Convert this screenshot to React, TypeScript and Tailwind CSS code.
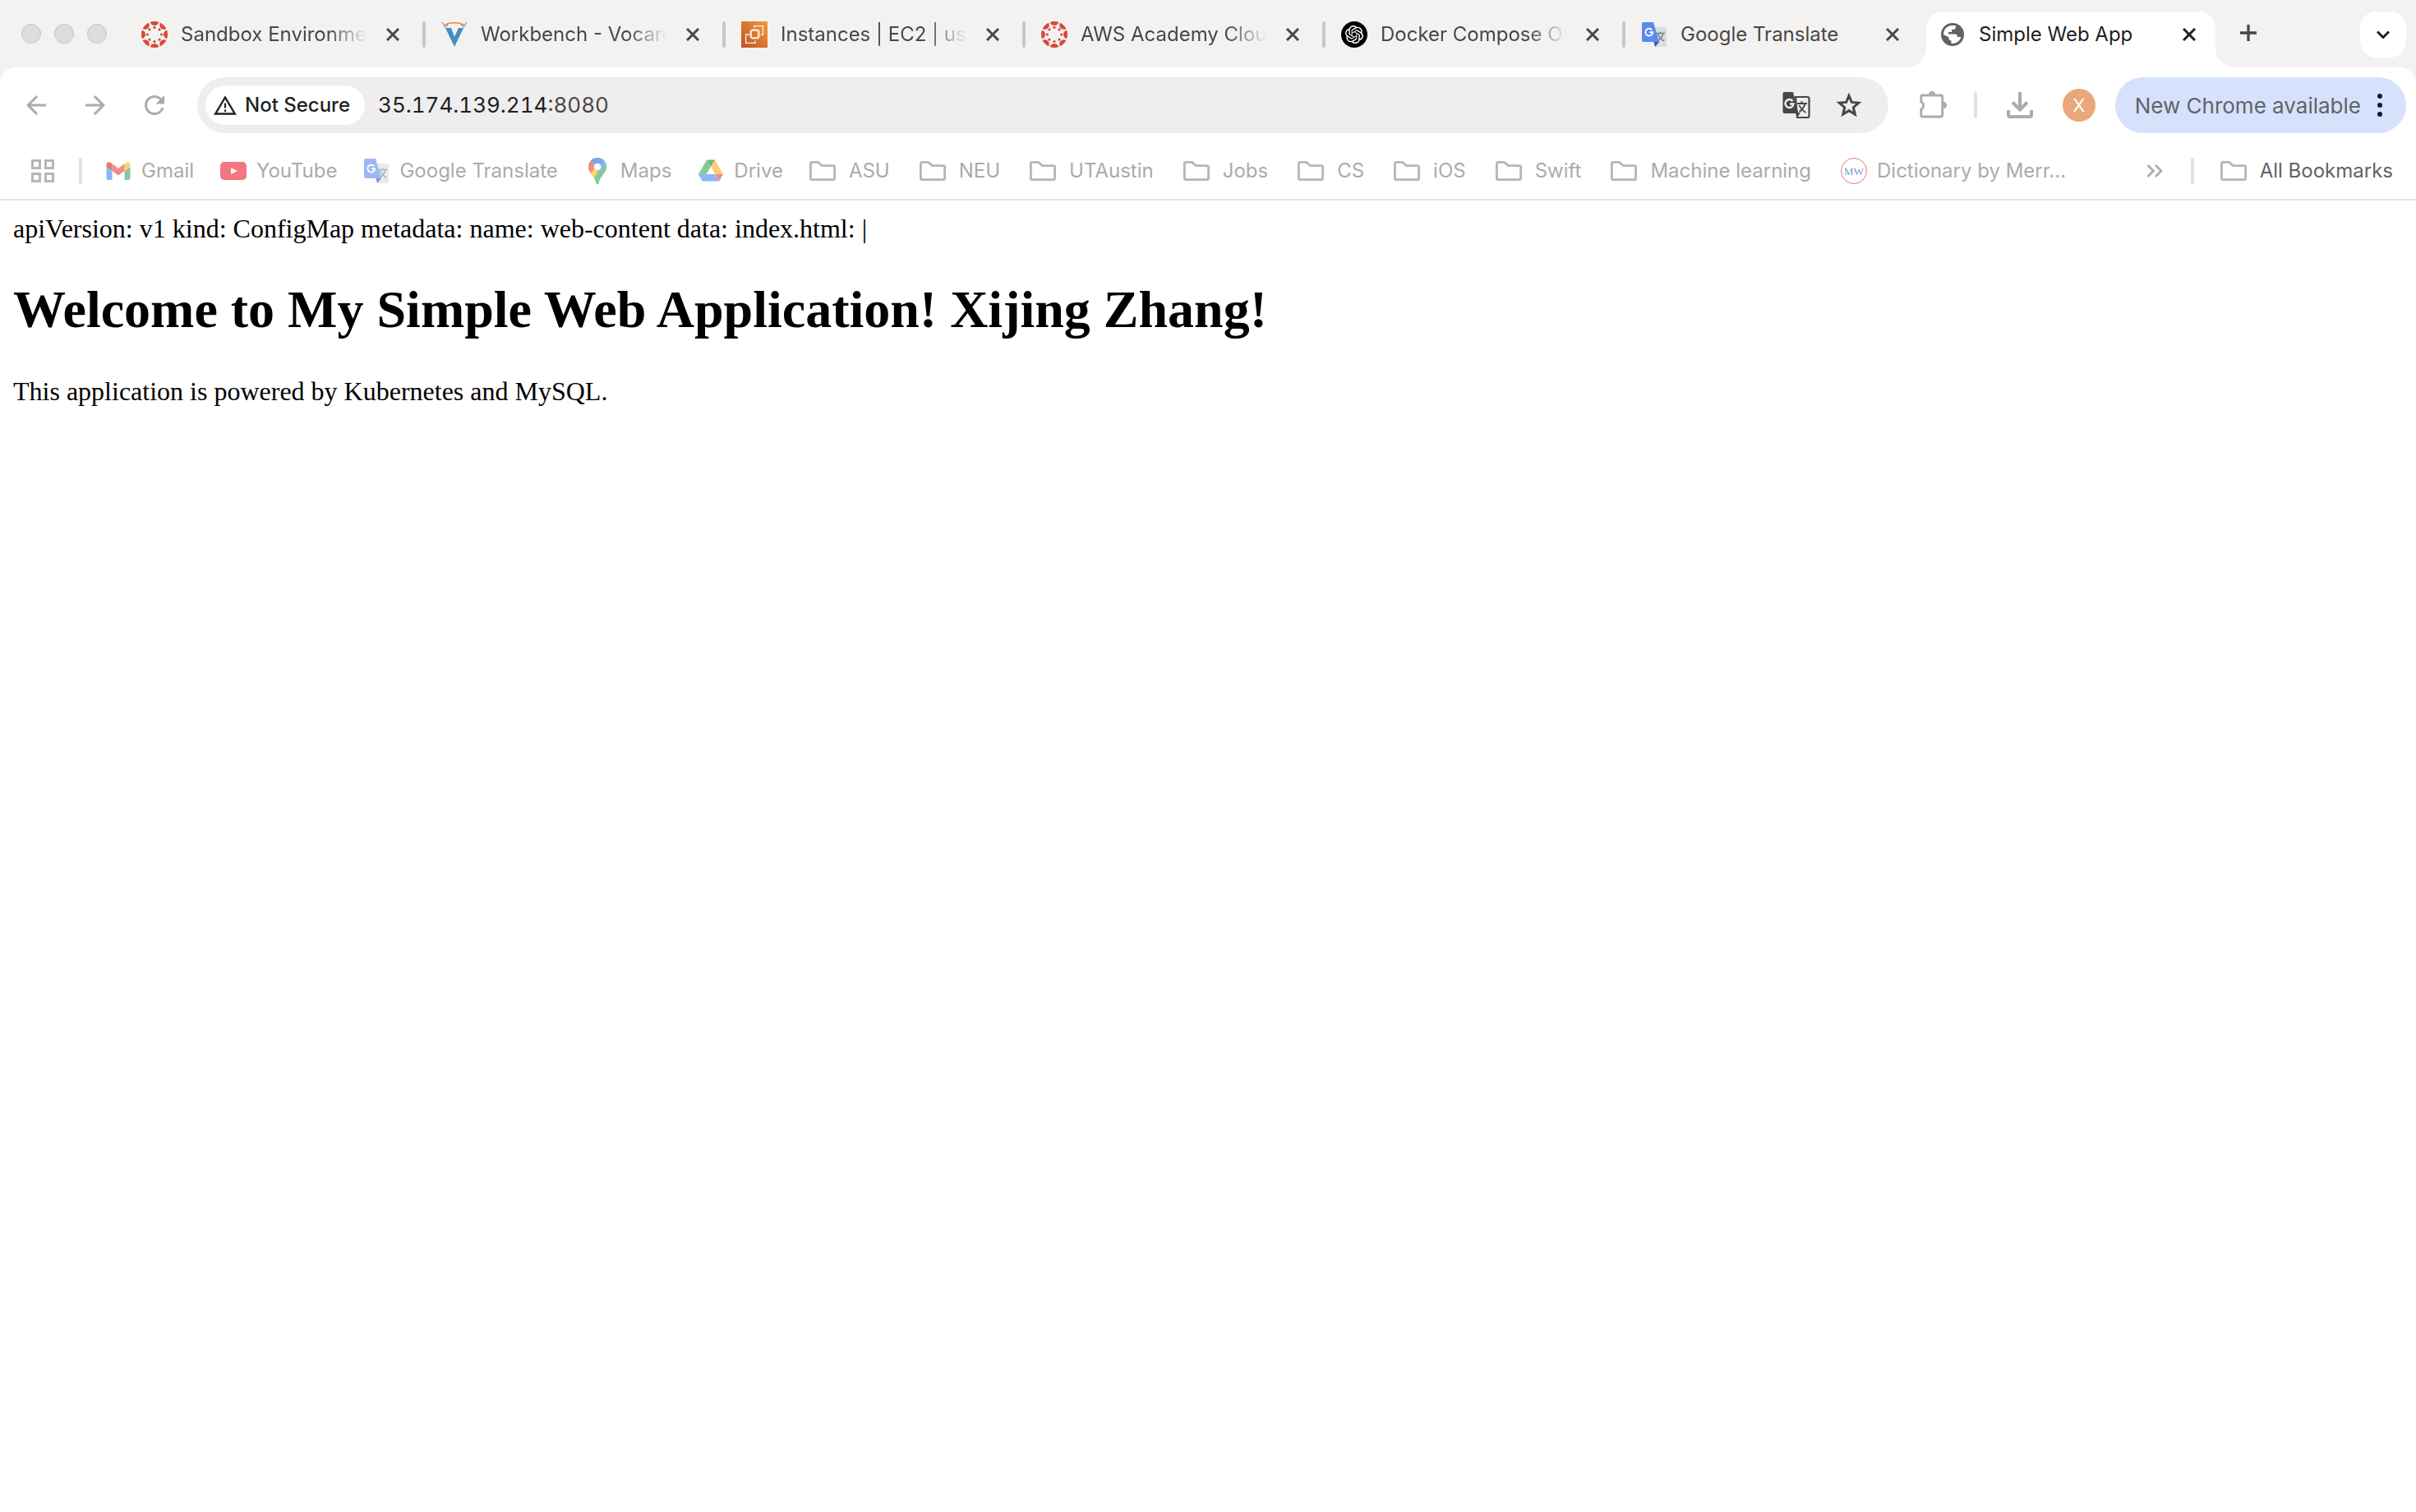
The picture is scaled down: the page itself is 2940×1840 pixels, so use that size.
import React from "react";
import { SiOpenai } from "react-icons/si";
import { MdArrowBack, MdArrowForward, MdRefresh } from "react-icons/md";

function CanvasIcon() {
  const spokes = [0, 45, 90, 135, 180, 225, 270, 315];
  return (
    <svg viewBox="0 0 32 32" className="size-8 shrink-0" fill="#d64a36" aria-hidden="true">
      <defs>
        <clipPath id="ring">
          <circle cx="16" cy="16" r="16" />
        </clipPath>
      </defs>
      <g clipPath="url(#ring)">
        {spokes.map((a) => (
          <g key={a} transform={`rotate(${a} 16 16)`}>
            <circle cx="16" cy="-0.4" r="5.4" />
            <circle cx="16" cy="7.4" r="1.6" />
          </g>
        ))}
      </g>
    </svg>
  );
}

function VocareumIcon() {
  return (
    <svg viewBox="0 0 32 32" className="size-8 shrink-0" aria-hidden="true">
      <path d="M5 8h7l4 11 5-11h6L16 31z" fill="#3f8fbf" />
      <path d="M1 1l5 8M31 1l-5 8" stroke="#6aa9cd" strokeWidth="1.4" fill="none" />
      <path d="M5 4c6-3 16-3 22 0" stroke="#ee8151" strokeWidth="1.6" fill="none" />
      <path d="M3 5l5-3v4zM29 5l-5-3v4z" fill="#ee8151" />
    </svg>
  );
}

function Ec2Icon() {
  return (
    <svg viewBox="0 0 32 32" className="size-8 shrink-0" aria-hidden="true">
      <defs>
        <linearGradient id="ec2" x1="0" y1="1" x2="1" y2="0">
          <stop offset="0" stopColor="#bd5226" />
          <stop offset="1" stopColor="#f49d37" />
        </linearGradient>
      </defs>
      <rect width="32" height="32" fill="url(#ec2)" />
      <g fill="none" stroke="#fff" strokeWidth="1.3">
        <rect x="12" y="11" width="9" height="9" strokeWidth="1.5" />
        <path d="M14 11V9M16.500 11V9M19 11V9M14 22v-2M16.500 22v-2M19 22v-2M12 13h-2M12 15.500h-2M12 18h-2M23 13h-2M23 15.500h-2M23 18h-2" strokeWidth="1" />
        <path d="M16 8V5.600h10.400v10.800H24M10 16H5.600v10.400H17V23.500" opacity="0.9" />
      </g>
    </svg>
  );
}

function OpenAiIcon() {
  return (
    <span className="flex size-8 shrink-0 items-center justify-center rounded-full bg-black text-white">
      <SiOpenai className="size-[22px]" aria-hidden="true" />
    </span>
  );
}

function TranslateIcon() {
  return (
    <svg viewBox="0 0 32 32" className="size-8 shrink-0" aria-hidden="true">
      <path d="M12 7h17a2 2 0 0 1 2 2v20a2 2 0 0 1-2 2H17z" fill="#dcdddd" />
      <path d="M18 14.500h11M23.500 12.500v2M27 14.500c-1 4.500-4 7.500-7 9.500M20 14.500c1.500 4 4 7 8 9.500" stroke="#6f8795" strokeWidth="1.500" fill="none" />
      <path d="M15.500 25H22l-5 6z" fill="#3a52b0" />
      <path d="M3 1h12l7 24H3a2 2 0 0 1-2-2V3a2 2 0 0 1 2-2z" fill="#5b8aee" />
      <path d="M13.300 10.500A4.400 4.400 0 1 0 14.200 13.300H10.200" stroke="#fff" strokeWidth="1.900" fill="none" />
    </svg>
  );
}

function GlobeIcon() {
  return (
    <svg viewBox="0 0 32 32" className="size-8 shrink-0" aria-hidden="true">
      <circle cx="16" cy="16" r="14" fill="#5f6368" />
      <path d="M5 15C5.500 9.500 9.500 5.500 15 5h5v1.500c0 2.500-1.500 3.500-3.500 3.500H15v3h-4v2.500h8c2 0 3 1.500 3 3.500h4.500c-1.500 4.500-5 7.500-10.500 8h-1.500v-3.500c-2 0-3-1-3-3v-1L5 16z" fill="#fff" />
    </svg>
  );
}

function GmailIcon() {
  return (
    <svg viewBox="0 0 32 32" className="size-8 shrink-0" aria-hidden="true">
      <path d="M1.500 11v14a2 2 0 0 0 2 2h5V16z" fill="#4285f4" />
      <path d="M30.500 11v14a2 2 0 0 1-2 2h-5V16z" fill="#34a853" />
      <path d="M23.500 8.500V16l7-5V8.500c0-3-3.200-4.200-5.400-2.500z" fill="#fbbc04" />
      <path d="M8.500 16V7l7.500 6 7.500-6v9L16 21.500z" fill="#ea4335" />
      <path d="M1.500 8.500V11l7 5V7.500L6.900 6C4.700 4.300 1.500 5.500 1.500 8.500z" fill="#c5221f" />
    </svg>
  );
}

function YouTubeIcon() {
  return (
    <svg viewBox="0 0 32 32" className="size-8 shrink-0" aria-hidden="true">
      <rect y="5" width="32" height="22" rx="5" fill="#ed1c2b" />
      <path d="M13 12v8l8-4z" fill="#fff" />
    </svg>
  );
}

function MapsIcon() {
  return (
    <svg viewBox="0 0 32 32" className="size-8 shrink-0" aria-hidden="true">
      <defs>
        <clipPath id="pin">
          <path d="M16 0a11 11 0 0 1 11 11c0 8-8 11-9.500 19.500a1.500 1.500 0 0 1-3 0C13 22 5 19 5 11A11 11 0 0 1 16 0z" />
        </clipPath>
      </defs>
      <g clipPath="url(#pin)">
        <rect width="32" height="32" fill="#34a853" />
        <path d="M0 20L16 11l-2 14-10 7z" fill="#fbbc04" />
        <path d="M27 0v4L12 24 0 20V14l10-12z" fill="#fbbc04" />
        <path d="M0 0h10l5 11-9 9-6-2z" fill="#ea4335" />
        <path d="M7 3L16 11 27 4V0H7z" fill="#1a73e8" />
        <path d="M16 11L25 3l6 6-16 9z" fill="#4285f4" />
        <path d="M28 7L11 25l3 7h14z" fill="#34a853" />
      </g>
      <circle cx="16" cy="11" r="4.300" fill="#fff" />
    </svg>
  );
}

function DriveIcon() {
  return (
    <svg viewBox="0 0 32 32" className="size-8 shrink-0" aria-hidden="true">
      <path d="M11 2.500L1 20l4.800 8.500L16 11z" fill="#34a853" />
      <path d="M11 2.500h10L16 11z" fill="#188038" />
      <path d="M21 2.500L31 20H21l-5-9z" fill="#fbaf14" />
      <path d="M21 20h10l-4.800 8.500z" fill="#ea4335" />
      <path d="M1 20h20l5.200 8.500H5.800z" fill="#4285f4" />
      <path d="M16 11l5.200 9H10.800z" fill="#fff" />
    </svg>
  );
}

function FolderIcon() {
  return (
    <svg viewBox="0 0 32 32" className="mr-1 size-8 shrink-0" fill="none" stroke="#b6b6b6" strokeWidth="2.800" strokeLinejoin="round" aria-hidden="true">
      <path d="M2.900 5.400h7.600l5 4.200h13.600a1.500 1.500 0 0 1 1.500 1.500v14a1.500 1.500 0 0 1-1.500 1.500H2.900a1.500 1.500 0 0 1-1.500-1.500V6.900a1.500 1.500 0 0 1 1.500-1.500z" />
    </svg>
  );
}

function MerriamIcon() {
  return (
    <span className="flex size-8 shrink-0 items-center justify-center rounded-full border border-[#d0202a] font-['Liberation_Serif',serif] text-[13px] leading-none text-[#1d4f93]">
      MW
    </span>
  );
}

function CloseIcon() {
  return (
    <svg viewBox="0 0 16 16" className="size-4" stroke="currentColor" strokeWidth="3" aria-hidden="true">
      <path d="M1 1l14 14M15 1L1 15" />
    </svg>
  );
}

type TabItem = { title: string; icon: React.ReactNode; faded?: boolean };

const tabs: TabItem[] = [
  { title: "Sandbox Environme", icon: <CanvasIcon />, faded: true },
  { title: "Workbench - Vocare", icon: <VocareumIcon />, faded: true },
  { title: "Instances | EC2 | us-", icon: <Ec2Icon />, faded: true },
  { title: "AWS Academy Clou", icon: <CanvasIcon />, faded: true },
  { title: "Docker Compose Ov", icon: <OpenAiIcon />, faded: true },
  { title: "Google Translate", icon: <TranslateIcon /> },
];

function TabBody({ title, icon, faded }: TabItem) {
  return (
    <>
      <button type="button" className="flex min-w-0 flex-1 items-center gap-4 text-left">
        {icon}
        <span
          className={
            faded
              ? "min-w-0 flex-1 overflow-hidden whitespace-nowrap [mask-image:linear-gradient(to_right,#000_calc(100%-48px),transparent)]"
              : "min-w-0 flex-1 overflow-hidden whitespace-nowrap"
          }
        >
          {title}
        </span>
      </button>
      <button type="button" aria-label={`Close ${title}`} className="flex size-8 shrink-0 items-center justify-center">
        <CloseIcon />
      </button>
    </>
  );
}

function TabStrip() {
  return (
    <div className="flex items-start pt-3.5 pr-3 pl-[26px] text-2xl leading-8 text-[#474747]">
      <div className="mt-[15px] mr-6 flex gap-4">
        <span className="size-6 rounded-full border border-[#c3c3c2] bg-[#dddddc]" />
        <span className="size-6 rounded-full border border-[#c3c3c2] bg-[#dddddc]" />
        <span className="size-6 rounded-full border border-[#c3c3c2] bg-[#dddddc]" />
      </div>
      {tabs.map((tab, i) => (
        <React.Fragment key={tab.title}>
          <div className="flex h-14 min-w-0 max-w-[352px] flex-1 items-center gap-4 pr-3 pl-[18px]">
            <TabBody {...tab} />
          </div>
          <span className={i < tabs.length - 1 ? "mt-3 mr-px ml-2 h-8 w-1 shrink-0 rounded-full bg-[#c7c7c7]" : "mr-px ml-2 w-1 shrink-0"} />
        </React.Fragment>
      ))}
      <div className="relative flex h-17 min-w-0 max-w-[352px] flex-1 items-center gap-4 rounded-t-[20px] bg-white px-4 pb-3 text-[#1f1f1f]">
        <span className="absolute bottom-0 -left-6 size-6 bg-[radial-gradient(circle_at_0_0,transparent_24px,#fff_24px)]" />
        <span className="absolute -right-6 bottom-0 size-6 bg-[radial-gradient(circle_at_100%_0,transparent_24px,#fff_24px)]" />
        <TabBody title="Simple Web App" icon={<GlobeIcon />} />
      </div>
      <button type="button" aria-label="New tab" className="ml-3 flex size-14 items-center justify-center pb-1">
        <svg viewBox="0 0 20 20" className="size-5" stroke="currentColor" strokeWidth="3.300" aria-hidden="true">
          <path d="M10 0v20M0 10h20" />
        </svg>
      </button>
      <button type="button" aria-label="Search tabs" className="ml-auto flex size-14 items-center justify-center rounded-[20px] bg-white text-[#1f1f1f]">
        <svg viewBox="0 0 16 10" className="h-2.5 w-4" stroke="currentColor" strokeWidth="3" fill="none" aria-hidden="true">
          <path d="M1 1.500l7 7 7-7" />
        </svg>
      </button>
    </div>
  );
}

function Toolbar() {
  return (
    <div className="flex items-center pt-3 pr-3 pl-6 text-[#ababab]">
      <button type="button" aria-label="Back" className="mr-8 flex size-10 items-center justify-center">
        <MdArrowBack className="size-9" />
      </button>
      <button type="button" aria-label="Forward" className="mr-8 flex size-10 items-center justify-center">
        <MdArrowForward className="size-9" />
      </button>
      <button type="button" aria-label="Reload" className="mr-8 flex size-10 items-center justify-center">
        <MdRefresh className="size-9" />
      </button>
      <div className="flex h-17 min-w-0 flex-1 items-center rounded-full bg-[#efedee] pr-[30px] pl-2.5 text-[#474747]">
        <button type="button" className="flex h-12 shrink-0 items-center gap-2.5 rounded-full bg-white pr-[18px] pl-2.5 text-2xl font-medium text-[#1f1f1f]">
          <svg viewBox="0 0 28 24" className="h-6 w-7" fill="none" aria-hidden="true">
            <path d="M14 2.500L25.800 22.500H2.200z" stroke="currentColor" strokeWidth="2.400" />
            <path d="M14 9.500v6M14 17.500v2.500" stroke="currentColor" strokeWidth="2.200" />
          </svg>
          Not Secure
        </button>
        <div role="textbox" aria-label="Address" className="ml-4 min-w-0 flex-1 text-[26px] leading-9 tabular-nums">
          <span className="text-[#1f1f1f]">35.174.139.214</span>:8080
        </div>
        <button type="button" aria-label="Translate this page" className="mr-7">
          <svg viewBox="0 0 36 36" className="size-9" fill="none" aria-hidden="true">
            <path d="M17 8h14.500a2 2 0 0 1 2 2v21a2 2 0 0 1-2 2H19z" stroke="#474747" strokeWidth="2.200" />
            <path d="M19 16h12M24.500 13v3M28.500 16c-1 4.500-4 8-7 10M21.500 18c1.500 3.500 4 6.500 8 9" stroke="#474747" strokeWidth="1.900" />
            <path d="M3.500 2H14l6.500 26H3.500a2 2 0 0 1-2-2V4a2 2 0 0 1 2-2z" fill="#474747" />
            <path d="M17 27h6l-4 6z" fill="#474747" />
            <path d="M13.500 13A5 5 0 1 0 14.500 16.500H10" stroke="#efedee" strokeWidth="2.400" />
          </svg>
        </button>
        <button type="button" aria-label="Bookmark this tab">
          <svg viewBox="0 0 36 36" className="size-9" fill="none" stroke="currentColor" strokeWidth="3" aria-hidden="true">
            <path d="M18 6.500l3.300 7.900 8.500.7-6.500 5.600 2 8.300L18 24.600 10.700 29l2-8.300-6.500-5.600 8.500-.7z" />
          </svg>
        </button>
      </div>
      <button type="button" aria-label="Extensions" className="ml-[34px]">
        <svg viewBox="0 0 40 40" className="size-10" fill="none" aria-hidden="true">
          <path d="M7.300 8h22.400a2 2 0 0 1 2 2v22a2 2 0 0 1-2 2H7.300a1.500 1.500 0 0 1-1.500-1.500V25a5 5 0 0 0 0-9V9.500A1.500 1.500 0 0 1 7.300 8z" stroke="#ababab" strokeWidth="2.800" />
          <path d="M15 7a4 4 0 0 1 8 0zM33 16a4 4 0 0 1 0 8z" fill="#ababab" />
        </svg>
      </button>
      <span className="mr-9 ml-[30px] h-8 w-1 rounded-full bg-[#e1e1e1]" />
      <button type="button" aria-label="Downloads">
        <svg viewBox="0 0 32 32" className="size-8" fill="none" stroke="currentColor" strokeWidth="4" aria-hidden="true">
          <path d="M16 0v21M7 12.500l9 9 9-9M2 22v6a2 2 0 0 0 2 2h24a2 2 0 0 0 2-2v-6" />
        </svg>
      </button>
      <button type="button" aria-label="Profile" className="ml-9 size-10 rounded-full bg-[#eaa77c] text-[22px] leading-10 text-white">
        X
      </button>
      <button type="button" className="ml-6 flex h-17 shrink-0 items-center rounded-full bg-[#d6e1fb] pr-[29px] pl-6 text-[26px] text-[#5f6368]">
        <span className="mr-5">New Chrome available</span>
        <svg viewBox="0 0 6 28" className="h-7 w-1.5" fill="#0b1b4d" aria-hidden="true">
          <circle cx="3" cy="3" r="3" />
          <circle cx="3" cy="14" r="3" />
          <circle cx="3" cy="25" r="3" />
        </svg>
      </button>
    </div>
  );
}

const bookmarks: { label: string; icon?: React.ReactNode }[] = [
  { label: "Gmail", icon: <GmailIcon /> },
  { label: "YouTube", icon: <YouTubeIcon /> },
  { label: "Google Translate", icon: <TranslateIcon /> },
  { label: "Maps", icon: <MapsIcon /> },
  { label: "Drive", icon: <DriveIcon /> },
  { label: "ASU" },
  { label: "NEU" },
  { label: "UTAustin" },
  { label: "Jobs" },
  { label: "CS" },
  { label: "iOS" },
  { label: "Swift" },
  { label: "Machine learning" },
  { label: "Dictionary by Merr...", icon: <MerriamIcon /> },
];

function BookmarksBar() {
  return (
    <nav aria-label="Bookmarks" className="flex h-[82px] items-center border-b-2 border-[#e2e2e2] pt-3 pr-7 pl-[38px] text-2xl text-[#ababab]">
      <button type="button" aria-label="Apps">
        <svg viewBox="0 0 28 28" className="size-7" fill="none" stroke="#b6b6b6" strokeWidth="3" aria-hidden="true">
          <path d="M1.500 1.500h9v9h-9zM17.500 1.500h9v9h-9zM1.500 17.500h9v9h-9zM17.500 17.500h9v9h-9z" />
        </svg>
      </button>
      <span className="mr-7 ml-[30px] h-8 w-1 shrink-0 rounded-full bg-[#e1e1e1]" />
      <ul className="flex min-w-0 flex-1 overflow-hidden whitespace-nowrap">
        {bookmarks.map((b) => (
          <li key={b.label} className={b.icon ? "mr-8" : "mr-9"}>
            <a href="#" className="flex items-center gap-3">
              {b.icon ? <span className="opacity-60">{b.icon}</span> : <FolderIcon />}
              {b.label}
            </a>
          </li>
        ))}
      </ul>
      <button type="button" aria-label="More bookmarks">
        <svg viewBox="0 0 20 16" className="h-4 w-5" fill="none" stroke="currentColor" strokeWidth="2.600" aria-hidden="true">
          <path d="M1.500 1l7 7-7 7M11 1l7 7-7 7" />
        </svg>
      </button>
      <span className="mr-8 ml-[34px] h-8 w-1 shrink-0 rounded-full bg-[#e1e1e1]" />
      <a href="#" className="flex shrink-0 items-center gap-3 text-[#5f6368]">
        <FolderIcon />
        All Bookmarks
      </a>
    </nav>
  );
}

export default function App() {
  return (
    <div className="min-h-screen bg-white font-['Inter',sans-serif]">
      <header className="bg-[#f4f2f1]">
        <TabStrip />
        <div className="rounded-t-[20px] bg-white">
          <Toolbar />
          <BookmarksBar />
        </div>
      </header>
      <main className="p-4 font-['Liberation_Serif','Times_New_Roman',serif] text-[32px] leading-9 text-black">
        <div>apiVersion: v1 kind: ConfigMap metadata: name: web-content data: index.html: |</div>
        <h1 className="my-11 text-[64px] leading-[74px] font-bold">Welcome to My Simple Web Application! Xijing Zhang!</h1>
        <p>This application is powered by Kubernetes and MySQL.</p>
      </main>
    </div>
  );
}
